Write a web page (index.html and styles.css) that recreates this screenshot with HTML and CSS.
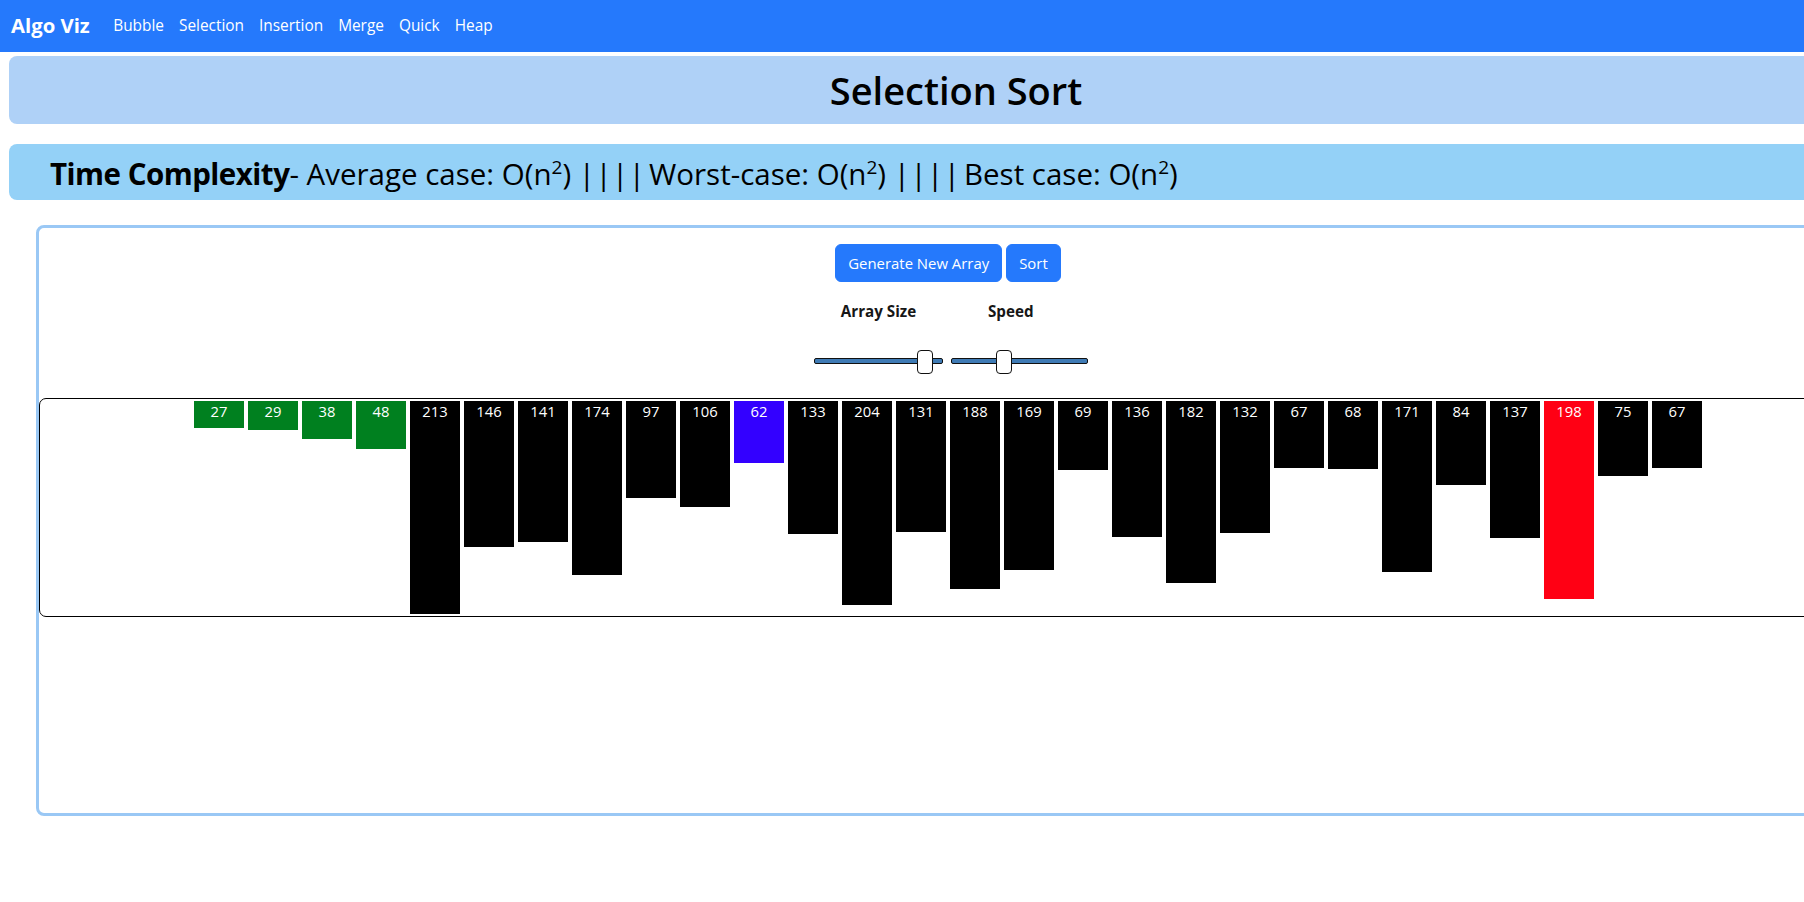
FILE: index.html
```html
<!DOCTYPE html>
<html lang="en">
<head>
<meta charset="utf-8">
<title>Algo Viz - Selection Sort</title>
<link rel="stylesheet" href="styles.css">
</head>
<body>
<nav class="navbar">
  <a class="brand" href="#">Algo Viz</a>
  <a class="nav-link" href="#">Bubble</a>
  <a class="nav-link" href="#">Selection</a>
  <a class="nav-link" href="#">Insertion</a>
  <a class="nav-link" href="#">Merge</a>
  <a class="nav-link" href="#">Quick</a>
  <a class="nav-link" href="#">Heap</a>
</nav>

<header class="title-box">
  <h1 class="title">Selection Sort</h1>
</header>

<section class="complexity-box">
  <h3 class="complexity"><b>Time Complexity</b>- Average case: O(n<sup>2</sup>) <span class="sep">| | | |</span> Worst-case: O(n<sup>2</sup>) <span class="sep">| | | |</span> Best case: O(n<sup>2</sup>)</h3>
</section>

<main class="visualizer">
  <div class="btn-row">
    <button class="btn">Generate New Array</button>
    <button class="btn">Sort</button>
  </div>
  <div class="slider-grid">
    <label class="slider-label size-label">Array Size</label>
    <label class="slider-label speed-label">Speed</label>
    <input class="slider size-slider" type="range" min="0" max="100" value="92">
    <input class="slider speed-slider" type="range" min="0" max="100" value="37">
  </div>
  <div class="bars-box">
    <div class="bar sorted" style="height:27px">27</div>
    <div class="bar sorted" style="height:29px">29</div>
    <div class="bar sorted" style="height:38px">38</div>
    <div class="bar sorted" style="height:48px">48</div>
    <div class="bar" style="height:213px">213</div>
    <div class="bar" style="height:146px">146</div>
    <div class="bar" style="height:141px">141</div>
    <div class="bar" style="height:174px">174</div>
    <div class="bar" style="height:97px">97</div>
    <div class="bar" style="height:106px">106</div>
    <div class="bar current-min" style="height:62px">62</div>
    <div class="bar" style="height:133px">133</div>
    <div class="bar" style="height:204px">204</div>
    <div class="bar" style="height:131px">131</div>
    <div class="bar" style="height:188px">188</div>
    <div class="bar" style="height:169px">169</div>
    <div class="bar" style="height:69px">69</div>
    <div class="bar" style="height:136px">136</div>
    <div class="bar" style="height:182px">182</div>
    <div class="bar" style="height:132px">132</div>
    <div class="bar" style="height:67px">67</div>
    <div class="bar" style="height:68px">68</div>
    <div class="bar" style="height:171px">171</div>
    <div class="bar" style="height:84px">84</div>
    <div class="bar" style="height:137px">137</div>
    <div class="bar comparing" style="height:198px">198</div>
    <div class="bar" style="height:75px">75</div>
    <div class="bar" style="height:67px">67</div>
  </div>
</main>
</body>
</html>
```

FILE: styles.css
```css
html, body {
  overflow-x: hidden;
}

body {
  margin: 0;
  font-family: "Open Sans", Lato, sans-serif;
  color: #000;
  background: #fff;
}

.navbar {
  display: flex;
  align-items: center;
  height: 52px;
  box-sizing: border-box;
  padding: 0 12px 2px 11px;
  background: #2579fc;
}

.brand {
  font-size: 20.3px;
  font-weight: 700;
  color: #fff;
  text-decoration: none;
  margin-right: 16px;
}

.nav-link {
  font-size: 15.4px;
  color: #fff;
  text-decoration: none;
  padding: 0 7.5px;
}

.title-box {
  width: 1894px;
  height: 68px;
  margin: 4px 0 0 9px;
  background: #afd1f7;
  border-radius: 8px;
  display: flex;
  align-items: center;
  justify-content: center;
}

.title {
  margin: 0;
  font-size: 38px;
  font-weight: 600;
}

.complexity-box {
  width: 1894px;
  height: 56px;
  margin: 20px 0 0 9px;
  padding: 3px 0 0 41px;
  box-sizing: border-box;
  background: #94d1f7;
  border-radius: 8px;
  display: flex;
  align-items: center;
}

.complexity {
  margin: 0;
  font-size: 29.5px;
  font-weight: 500;
  line-height: 1;
}

.complexity b {
  font-weight: 700;
  letter-spacing: -0.5px;
}

.complexity sup {
  font-size: 19px;
  line-height: 0;
}

.complexity .sep {
  letter-spacing: -3.6px;
}

.visualizer {
  width: 1824px;
  height: 591px;
  margin: 25px 0 0 36px;
  box-sizing: border-box;
  border: 3px solid #9ac8f5;
  border-radius: 8px;
  padding-top: 16px;
  display: flex;
  flex-direction: column;
}

.btn-row {
  display: flex;
  justify-content: center;
  gap: 4px;
}

.btn {
  font-family: "Open Sans", Lato, sans-serif;
  font-size: 14.9px;
  line-height: 24px;
  padding: 6px 12px;
  color: #fff;
  background: #2579fc;
  border: 1px solid #2579fc;
  border-radius: 6px;
}

.slider-grid {
  display: grid;
  grid-template-columns: 129px 137px;
  grid-template-rows: 22px 24px;
  column-gap: 8px;
  row-gap: 27px;
  justify-content: center;
  padding-left: 6px;
  margin-top: 18px;
}

.slider-label {
  font-size: 15.2px;
  font-weight: 700;
  line-height: 22px;
  color: #161616;
  white-space: nowrap;
}

.size-label {
  text-align: center;
}

.speed-label {
  padding-left: 37px;
}

.slider {
  -webkit-appearance: none;
  appearance: none;
  margin: 0;
  height: 24px;
  background: transparent;
}

.size-slider { width: 129px; }
.speed-slider { width: 137px; }

.slider::-webkit-slider-runnable-track {
  height: 6px;
  background: #3f7bb5;
  border: 1px solid #111;
  border-radius: 2px;
}

.slider::-webkit-slider-thumb {
  -webkit-appearance: none;
  box-sizing: border-box;
  width: 16px;
  height: 24px;
  margin-top: -9px;
  background: #fff;
  border: 1.5px solid #111;
  border-radius: 4px;
}

.bars-box {
  margin-top: 25px;
  height: 219px;
  box-sizing: border-box;
  width: 1818px;
  border: 1px solid #000;
  border-radius: 7px;
  padding-top: 2px;
  display: flex;
  justify-content: center;
  align-items: flex-start;
}

.bar {
  width: 50px;
  margin: 0 2px;
  flex-shrink: 0;
  background: #000;
  color: #fff;
  font-size: 14.8px;
  text-align: center;
  line-height: 1.25;
  padding-top: 1px;
  box-sizing: border-box;
}

.bar.sorted { background: #00801f; }
.bar.current-min { background: #3300ff; }
.bar.comparing { background: #ff0014; }
```
